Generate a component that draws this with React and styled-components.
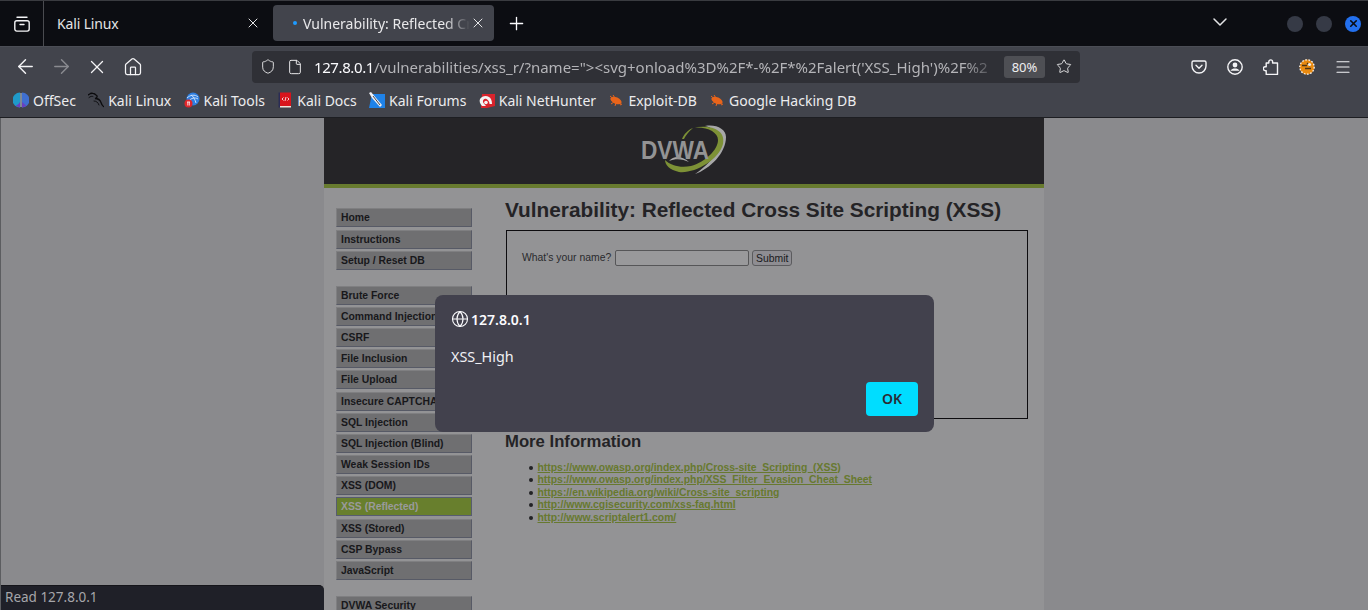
import React from "react";
import styled, { createGlobalStyle } from "styled-components";
import { ArrowLeft, ArrowRight, X, Home, Shield, File, Star, Menu as MenuIcon, Plus, ChevronDown, Globe } from "lucide-react";

const Global = createGlobalStyle`
  html, body { margin: 0; padding: 0; background: #8a8a8d; overflow: hidden; }
  * { box-sizing: border-box; }
`;

const UI = `"Noto Sans", "Open Sans", sans-serif`;
const WEB = `"Liberation Sans", Arial, sans-serif`;

const Root = styled.div`
  position: relative;
  width: 1368px;
  height: 610px;
  overflow: hidden;
  display: flex;
  flex-direction: column;
  font-family: ${UI};
  background: #8a8a8d;
`;

const TabBar = styled.div`
  height: 46px;
  flex: none;
  display: flex;
  align-items: center;
  background: #0c0d12;
  border-top: 1px solid #3a3b40;
  color: #fbfbfe;
  font-size: 14px;
`;
const ViewButton = styled.div`
  width: 44px;
  height: 45px;
  flex: none;
  display: flex;
  align-items: center;
  justify-content: center;
  border-right: 1px solid #4a4b50;
`;
const Tab = styled.div`
  flex: none;
  height: 36px;
  margin-top: -1px;
  display: flex;
  align-items: center;
  border-radius: 4px;
  position: relative;
  background: ${p => (p.$active ? "#42444c" : "transparent")};
  width: ${p => (p.$active ? "221px" : "229px")};
  padding-left: ${p => (p.$active ? "30px" : "13px")};
`;
const TabTitle = styled.span`
  display: block;
  white-space: nowrap;
  overflow: hidden;
  width: ${p => (p.$fade ? "167px" : "190px")};
  color: ${p => (p.$fade ? "#e8e8ea" : "#e4e4e6")};
  ${p => (p.$fade ? "mask-image: linear-gradient(to right, #000 85%, transparent 100%);" : "letter-spacing: -0.15px;")}
`;
const TabDot = styled.span`
  position: absolute;
  left: 20px;
  top: 16px;
  width: 4px;
  height: 4px;
  border-radius: 50%;
  background: #1e9bff;
`;
const TabClose = styled.span`
  position: absolute;
  right: ${p => p.$right}px;
  top: 10px;
  display: flex;
  color: #e4e4e6;
`;
const NewTab = styled.div`
  width: 44px;
  display: flex;
  justify-content: center;
`;
const TabSpacer = styled.div`
  flex: 1;
`;
const Chevron = styled.div`
  width: 24px;
  display: flex;
  justify-content: center;
  margin-right: 55px;
  margin-top: -3px;
  color: #e4e4e6;
`;
const WinDots = styled.div`
  display: flex;
  gap: 13px;
  margin-right: 7px;
`;
const WinDot = styled.span`
  width: 16px;
  height: 16px;
  border-radius: 50%;
  display: flex;
  align-items: center;
  justify-content: center;
  background: ${p => (p.$close ? "#2370ee" : "#363a46")};
  color: #0c0d12;
`;

const NavBar = styled.div`
  height: 39px;
  flex: none;
  display: flex;
  align-items: center;
  padding: 1px 7px 0;
  background: #42444c;
  border-top: 1px solid #4b4d55;
  color: #f4f4f6;
`;
const IconSlot = styled.div`
  width: 36px;
  height: 32px;
  flex: none;
  display: flex;
  align-items: center;
  justify-content: center;
  color: ${p => (p.$dim ? "#8a8b90" : "#f4f4f6")};
`;
const UrlBar = styled.div`
  width: 828px;
  height: 32px;
  flex: none;
  margin: 0 101px;
  border-radius: 4px;
  background: #2f3036;
  display: flex;
  align-items: center;
  padding-left: 8px;
  gap: 11px;
  color: #e8e8ea;
`;
const UrlIcon = styled.div`
  width: 16px;
  height: 16px;
  flex: none;
  display: flex;
  align-items: center;
  justify-content: center;
`;
const UrlText = styled.div`
  width: 684px;
  flex: none;
  white-space: nowrap;
  overflow: hidden;
  font-size: 15px;
  color: #b4b4b8;
  mask-image: linear-gradient(to right, #000 95%, transparent 100%);
`;
const UrlHost = styled.span`
  color: #fbfbfe;
  letter-spacing: -0.4px;
`;
const ZoomBadge = styled.div`
  width: 41px;
  height: 22px;
  flex: none;
  margin-left: -5px;
  border-radius: 3px;
  background: #4e4f54;
  display: flex;
  align-items: center;
  justify-content: center;
  font-size: 13px;
  color: #eeeef0;
`;

const BookmarkBar = styled.div`
  height: 33px;
  flex: none;
  display: flex;
  align-items: center;
  gap: 12.3px;
  padding: 0 0 2px 13px;
  background: #42444c;
  border-bottom: 1px solid #1d1e22;
  font-size: 14px;
  color: #ececee;
`;
const Bookmark = styled.div`
  display: flex;
  align-items: center;
  gap: 4px;
  white-space: nowrap;
`;

const Page = styled.div`
  flex: 1;
  min-height: 0;
  background: #8a8a8d;
  border-left: 1px solid #5c5d60;
`;
const Container = styled.div`
  width: 720px;
  margin-left: 323px;
  background: #939395;
  min-height: 100%;
  font-family: ${WEB};
`;
const Header = styled.div`
  height: 70px;
  background: #252427;
  border-bottom: 4px solid #687b2f;
  display: flex;
  align-items: center;
  justify-content: center;
`;
const Body = styled.div`
  display: flex;
  align-items: flex-start;
`;
const Nav = styled.div`
  width: 136px;
  margin: 20.4px 0 0 12px;
  flex: none;
  display: flex;
  flex-direction: column;
`;
const NavGroup = styled.div`
  display: flex;
  flex-direction: column;
  gap: 2.18px;
  margin-bottom: 15.99px;
`;
const NavItem = styled.div`
  height: 19px;
  padding: 0 0 0 4px;
  display: flex;
  align-items: center;
  white-space: nowrap;
  font-size: 10.4px;
  font-weight: 700;
  overflow: hidden;
  color: ${p => (p.$active ? "#9a9a9c" : "#18181b")};
  background: ${p => (p.$active ? "#687f2d" : "#6f6f71")};
  border: 1px solid;
  border-color: ${p => (p.$active ? "#575c70" : "#7f7f81 #575a66 #575a66 #7f7f81")};
`;
const Main = styled.div`
  width: 523px;
  margin-left: 33px;
  flex: none;
`;
const Title = styled.h1`
  margin: 10px 0 8px;
  font-size: 20.8px;
  line-height: 24px;
  font-weight: 700;
  color: #242326;
  white-space: nowrap;
`;
const FormBox = styled.div`
  margin-left: 1px;
  width: 522px;
  height: 189px;
  border: 1px solid #0d0c0f;
  padding: 19px 0 0 15px;
`;
const FormRow = styled.div`
  display: flex;
  align-items: center;
  font-size: 10.4px;
  color: #2a2a2d;
`;
const NameLabel = styled.span`
  position: relative;
  top: -1px;
`;
const NameField = styled.div`
  width: 134px;
  height: 16px;
  margin-left: 4px;
  border: 1px solid #565658;
  border-radius: 2px;
  background: #99999b;
`;
const SubmitButton = styled.div`
  width: 40px;
  height: 16px;
  margin-left: 3px;
  border: 1px solid #5b5b5e;
  border-radius: 3px;
  background: #8e8d92;
  color: #1a1a1d;
  display: flex;
  align-items: center;
  justify-content: center;
  font-size: 10.4px;
`;
const SubTitle = styled.h2`
  margin: 13px 0 9.5px;
  font-size: 16.7px;
  line-height: 20px;
  font-weight: 700;
  color: #242326;
`;
const LinkList = styled.ul`
  margin: 0;
  padding: 0 0 0 32.5px;
  list-style: none;
  font-size: 10.4px;
  line-height: 12.5px;
`;
const LinkItem = styled.li`
  position: relative;
  font-weight: 700;
  &::before {
    content: "";
    position: absolute;
    left: -9px;
    top: 4px;
    width: 4px;
    height: 4px;
    border-radius: 50%;
    background: #222224;
  }
`;
const LinkText = styled.span`
  color: #67792f;
  text-decoration: underline;
`;

const Dialog = styled.div`
  position: absolute;
  left: 435px;
  top: 295px;
  width: 499px;
  height: 137px;
  border-radius: 8px;
  background: #42414d;
  color: #fbfbfe;
  padding: 14px 16px 16px;
  display: flex;
  flex-direction: column;
`;
const DialogHost = styled.div`
  display: flex;
  align-items: center;
  gap: 2px;
  height: 20px;
  font-size: 14px;
  font-weight: 600;
`;
const DialogMsg = styled.div`
  margin-top: 18px;
  height: 20px;
  font-size: 14.4px;
  line-height: 20px;
  color: #f0f0f4;
`;
const DialogActions = styled.div`
  margin-top: auto;
  display: flex;
  justify-content: flex-end;
`;
const OkButton = styled.div`
  width: 52px;
  height: 34px;
  padding-bottom: 2px;
  border-radius: 4px;
  background: #00ddff;
  color: #2b2a33;
  font-size: 14px;
  font-weight: 600;
  display: flex;
  align-items: center;
  justify-content: center;
`;
const Status = styled.div`
  position: absolute;
  left: 1px;
  bottom: 0;
  width: 323px;
  height: 25px;
  background: #1f2028;
  border-top: 1px solid #15151a;
  border-top-right-radius: 5px;
  color: #a6a6aa;
  font-size: 13.5px;
  line-height: 23px;
  padding-left: 4px;
`;

const S = { strokeWidth: 1.5 };

const ViewIcon = () => (
  <svg width="16" height="16" viewBox="0 0 16 16" fill="none" stroke="#f4f4f6" strokeWidth="1.4">
    <rect x="0.8" y="4.7" width="14.4" height="10.4" rx="2" />
    <path d="M3 1.2h10" strokeLinecap="round" />
    <path d="M6 8.5h4" strokeLinecap="round" />
  </svg>
);
const PocketIcon = () => (
  <svg width="16" height="16" viewBox="0 0 16 16" fill="none" stroke="#f4f4f6" strokeWidth="1.4" strokeLinecap="round" strokeLinejoin="round">
    <path d="M2.5 2h11A1.5 1.5 0 0 1 15 3.5V7a7 7 0 0 1-14 0V3.5A1.5 1.5 0 0 1 2.5 2z" />
    <path d="M5 6.3l3 2.9 3-2.9" />
  </svg>
);
const AccountIcon = () => (
  <svg width="16" height="16" viewBox="0 0 16 16" fill="none" stroke="#f4f4f6" strokeWidth="1.4">
    <circle cx="8" cy="8" r="7.2" />
    <circle cx="8" cy="6" r="2.4" fill="#f4f4f6" stroke="none" />
    <path d="M3.4 11.800c1-1.800 2.800-2.400 4.600-2.400s3.600.6 4.600 2.400z" fill="#f4f4f6" stroke="none" />
  </svg>
);
const PuzzleIcon = () => (
  <svg width="16" height="16" viewBox="0 0 16 16" fill="none" stroke="#f4f4f6" strokeWidth="1.4" strokeLinejoin="round">
    <path d="M5.800 3.800V2.600a1.900 1.900 0 0 1 3.800 0v1.200h4.900v11.400H3.200v-3.700H2.300a2 2 0 0 1 0-4h.9V3.800z" transform="translate(0 .2)" />
  </svg>
);
const TigerIcon = () => (
  <svg width="16" height="16" viewBox="0 0 16 16">
    <circle cx="8" cy="8" r="7.4" fill="#e98a10" />
    <circle cx="8" cy="8" r="7.2" fill="none" stroke="#f5f5f5" strokeWidth="1.3" strokeDasharray="1.6 1.6" />
    <path d="M3 6.500h5M6 9.500h6M8 4l3 3" stroke="#4a3418" strokeWidth="1.3" />
    <circle cx="10.500" cy="5.500" r="1.600" fill="#f3f0e8" />
  </svg>
);
const OffSecIcon = () => (
  <svg width="16" height="16" viewBox="0 0 16 16">
    <path d="M7 .5A7.500 7.500 0 0 0 7 15.500z" fill="#1f9ac9" />
    <path d="M9 .5A7.500 7.500 0 0 1 9 15.500z" fill="#3f6fd0" />
    <path d="M7 10a7.500 7.500 0 0 1-4.500 4L7 15.500zM9 10l4.500 4L9 15.500z" fill="#6a3fc0" />
    <path d="M8 1v14" stroke="#c8e0ee" strokeWidth="0.9" />
  </svg>
);
const KaliIcon = () => (
  <svg width="16" height="16" viewBox="0 0 16 16" fill="none" stroke="#0b0b0d" strokeWidth="1.3" strokeLinecap="round">
    <path d="M0 3c3-2 6-2 8 0 2 1 1 3-1 3.500 2 0 5 1 6 4 .5 1.500 1 3 2.500 4" />
    <path d="M3 1l4 1M1 5.500c1.500-1.200 3-1.500 4-1M6 9c2 0 4 1 5 4" strokeWidth="0.9" />
  </svg>
);
const ToolsIcon = () => (
  <svg width="16" height="16" viewBox="0 0 16 16">
    <circle cx="9" cy="7" r="6.500" fill="#2f7fe0" />
    <path d="M3 6c3-3 8-4 11-1M5 9c2-3 6-4 9-2M7 3c2 1 4 4 5 8" stroke="#d8e8fa" strokeWidth="0.9" fill="none" />
    <circle cx="4.500" cy="11.500" r="4" fill="#e0262b" />
    <path d="M3 10h3M3.800 10v3.500M5.300 10v3.500" stroke="#fff" strokeWidth="0.8" />
  </svg>
);
const DocsIcon = () => (
  <svg width="16" height="16" viewBox="0 0 16 16">
    <rect x="1.500" y="0.500" width="2.500" height="15" fill="#2a2c55" />
    <rect x="3" y="0.500" width="11" height="13.500" fill="#d8141c" />
    <rect x="3" y="14" width="11" height="1.500" fill="#f0e0d8" />
    <path d="M6.500 5.500L5 7l1.500 1.500M10.500 5.500L12 7l-1.500 1.500M9 5l-1 4" stroke="#fff" strokeWidth="0.8" fill="none" />
  </svg>
);
const ForumIcon = () => (
  <svg width="16" height="16" viewBox="0 0 16 16">
    <path d="M3 2h13v14H0z" fill="#1f82e8" />
    <path d="M2 0l11 13-2 2L3 6 0 1z" fill="#f0f0f4" />
    <path d="M4 4l7 9" stroke="#303038" strokeWidth="0.9" />
  </svg>
);
const HunterIcon = () => (
  <svg width="16" height="16" viewBox="0 0 16 16">
    <path d="M3 2h13v12l-8 2H2z" fill="#d8232c" />
    <path d="M1 7c2-3 6-4 9-2 2 1 3 4 3 7h-2.500c0-2-1-4-3-5C5.500 6 3.500 8 4 10c.3 1.500 2 2.500 3 4H3C1 12 0 9 1 7z" fill="#f4f4f4" />
    <circle cx="7" cy="10.500" r="1.800" fill="#f4f4f4" />
  </svg>
);
const BugIcon = () => (
  <svg width="16" height="16" viewBox="0 0 16 16">
    <ellipse cx="8" cy="8.500" rx="6" ry="3.200" fill="#e8641b" transform="rotate(25 8 8.500)" />
    <path d="M2 4l3 2.500M5 3l2 3M3 12l3-2M7 14l1-3M12 13l2-1" stroke="#e8641b" strokeWidth="1" />
  </svg>
);
const DvwaLogo = () => (
  <svg width="90" height="56" viewBox="640 123 90 56">
    <path d="M706 126C717 124 727 129 727 137C727 153 711 169 696 174C708 166 723 151 722 138C721 132 714 128 706 126Z" fill="#a8a8a9" />
    <path d="M693 128C712 124 727 130 724 144C720 160 695 174 680 172C671 170 666 165 666 160C672 166 682 168 692 166C706 162 719 150 719 140C719 132 707 126 693 128Z" fill="#7d9136" />
    <path d="M683 139C685 134 689 130 694 128C690 131 687 135 685 139Z" fill="#7d9136" />
    <path d="M670 161C675 155 683 156 690 162C684 159 677 158 670 161Z" fill="#a8a8a9" />
    <text x="642" y="159" fontFamily="Liberation Sans, Arial, sans-serif" fontWeight="700" fontSize="26" fill="#939394" textLength="68" lengthAdjust="spacingAndGlyphs">DVWA</text>
  </svg>
);

const marks = [
  [OffSecIcon, "OffSec"],
  [KaliIcon, "Kali Linux"],
  [ToolsIcon, "Kali Tools"],
  [DocsIcon, "Kali Docs"],
  [ForumIcon, "Kali Forums"],
  [HunterIcon, "Kali NetHunter"],
  [BugIcon, "Exploit-DB"],
  [BugIcon, "Google Hacking DB"],
];

const groups = [
  ["Home", "Instructions", "Setup / Reset DB"],
  ["Brute Force", "Command Injection", "CSRF", "File Inclusion", "File Upload", "Insecure CAPTCHA", "SQL Injection", "SQL Injection (Blind)", "Weak Session IDs", "XSS (DOM)", "XSS (Reflected)", "XSS (Stored)", "CSP Bypass", "JavaScript"],
  ["DVWA Security"],
];

const links = [
  "https://www.owasp.org/index.php/Cross-site_Scripting_(XSS)",
  "https://www.owasp.org/index.php/XSS_Filter_Evasion_Cheat_Sheet",
  "https://en.wikipedia.org/wiki/Cross-site_scripting",
  "http://www.cgisecurity.com/xss-faq.html",
  "http://www.scriptalert1.com/",
];

export default function App() {
  return (
    <Root>
      <Global />
      <TabBar>
        <ViewButton><ViewIcon /></ViewButton>
        <Tab>
          <TabTitle>Kali Linux</TabTitle>
          <TabClose $right={12}><X size={16} {...S} /></TabClose>
        </Tab>
        <Tab $active>
          <TabDot />
          <TabTitle $fade>Vulnerability: Reflected Cross Site Scripting (XSS)</TabTitle>
          <TabClose $right={8}><X size={16} {...S} /></TabClose>
        </Tab>
        <NewTab><Plus size={21} {...S} /></NewTab>
        <TabSpacer />
        <Chevron><ChevronDown size={24} {...S} /></Chevron>
        <WinDots>
          <WinDot />
          <WinDot />
          <WinDot $close><X size={11} strokeWidth={3.5} /></WinDot>
        </WinDots>
      </TabBar>
      <NavBar>
        <IconSlot><ArrowLeft size={23} {...S} /></IconSlot>
        <IconSlot $dim><ArrowRight size={23} {...S} /></IconSlot>
        <IconSlot><X size={22} strokeWidth={1.4} /></IconSlot>
        <IconSlot><Home size={20} {...S} /></IconSlot>
        <UrlBar>
          <UrlIcon><Shield size={21} strokeWidth={1.4} /></UrlIcon>
          <UrlIcon><File size={18} {...S} /></UrlIcon>
          <UrlText><UrlHost>127.8.0.1</UrlHost>/vulnerabilities/xss_r/?name="&gt;&lt;svg+onload%3D%2F*-%2F*%2Falert('XSS_High')%2F%2</UrlText>
          <ZoomBadge>80%</ZoomBadge>
          <UrlIcon><Star size={21} strokeWidth={1.4} /></UrlIcon>
        </UrlBar>
        <IconSlot><PocketIcon /></IconSlot>
        <IconSlot><AccountIcon /></IconSlot>
        <IconSlot><PuzzleIcon /></IconSlot>
        <IconSlot><TigerIcon /></IconSlot>
        <IconSlot><MenuIcon size={18} {...S} /></IconSlot>
      </NavBar>
      <BookmarkBar>
        {marks.map(([Icon, label]) => (
          <Bookmark key={label}><Icon />{label}</Bookmark>
        ))}
      </BookmarkBar>
      <Page>
        <Container>
          <Header><DvwaLogo /></Header>
          <Body>
            <Nav>
              {groups.map((g, i) => (
                <NavGroup key={i}>
                  {g.map(item => (
                    <NavItem key={item} $active={item === "XSS (Reflected)"}>{item}</NavItem>
                  ))}
                </NavGroup>
              ))}
            </Nav>
            <Main>
              <Title>Vulnerability: Reflected Cross Site Scripting (XSS)</Title>
              <FormBox>
                <FormRow>
                  <NameLabel>What's your name?</NameLabel>
                  <NameField />
                  <SubmitButton>Submit</SubmitButton>
                </FormRow>
              </FormBox>
              <SubTitle>More Information</SubTitle>
              <LinkList>
                {links.map(l => (
                  <LinkItem key={l}><LinkText>{l}</LinkText></LinkItem>
                ))}
              </LinkList>
            </Main>
          </Body>
        </Container>
      </Page>
      <Dialog>
        <DialogHost><Globe size={18} {...S} />127.8.0.1</DialogHost>
        <DialogMsg>XSS_High</DialogMsg>
        <DialogActions><OkButton>OK</OkButton></DialogActions>
      </Dialog>
      <Status>Read 127.8.0.1</Status>
    </Root>
  );
}
